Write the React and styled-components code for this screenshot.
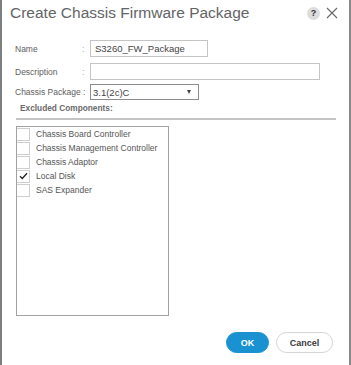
import React from "react";
import styled, { createGlobalStyle } from "styled-components";

const Global = createGlobalStyle`
  html, body { margin: 0; padding: 0; background: #fff; }
  body { font-family: "Liberation Sans", Arial, sans-serif; }
  * { box-sizing: border-box; }
`;

const Dialog = styled.div`
  width: 351px;
  height: 365px;
  background: #fff;
  border-left: 2px solid #7c7f80;
  border-right: 2px solid #8a8a8a;
  display: flex;
  flex-direction: column;
`;

const Header = styled.div`
  display: flex;
  align-items: center;
  justify-content: space-between;
  padding: 4px 8px 0 8px;
  height: 26px;
`;

const Title = styled.h1`
  margin: 0;
  font-size: 15.5px;
  line-height: 18px;
  font-weight: 400;
  color: #636466;
  align-self: flex-start;
`;

const HeaderIcons = styled.div`
  display: flex;
  align-items: center;
  gap: 6px;
  margin-top: -4px;
  margin-right: 3px;
`;

const HelpIcon = styled.span`
  width: 13px;
  height: 13px;
  border-radius: 50%;
  background: #dcdcdc;
  color: #333;
  font-size: 9px;
  font-weight: 700;
  display: flex;
  align-items: center;
  justify-content: center;
`;

const Form = styled.div`
  padding: 14px 0 0 13px;
  display: flex;
  flex-direction: column;
`;

const Row = styled.div`
  display: grid;
  grid-template-columns: 67px 8px auto;
  align-items: center;
  height: ${(p) => p.$h}px;
  margin-top: ${(p) => p.$mt}px;
`;

const Label = styled.span`
  font-size: 8.5px;
  color: #5e5e5e;
  white-space: nowrap;
`;

const Colon = styled.span`
  font-size: 8.5px;
  color: #aaa;
`;

const Input = styled.div`
  width: ${(p) => p.$w}px;
  height: 100%;
  border: 1px solid #c4c4c4;
  font-size: 9.5px;
  color: #444;
  display: flex;
  align-items: center;
  padding-left: 4px;
`;

const Select = styled(Input)`
  border-color: #8c8c8c;
  justify-content: space-between;
  padding-right: 7px;
  padding-left: 2px;
`;

const Arrow = styled.span`
  width: 0;
  height: 0;
  border-left: 2.5px solid transparent;
  border-right: 2.5px solid transparent;
  border-top: 4px solid #444;
`;

const SectionTitle = styled.div`
  margin: 3px 13px 0 14px;
  font-size: 8.3px;
  font-weight: 700;
  color: #6a6a6a;
  padding: 0 0 5px 4px;
  border-bottom: 2px solid #c4c4c4;
`;

const ListBox = styled.div`
  margin: 6px 0 0 14px;
  width: 153px;
  height: 190px;
  border: 1px solid #a2a2a2;
  display: flex;
  flex-direction: column;
`;

const Item = styled.div`
  display: flex;
  align-items: center;
  height: 14px;
  gap: 6px;
`;

const Box = styled.span`
  width: 13px;
  height: 13px;
  border: 1px solid #cfcfcf;
  border-left: none;
  display: flex;
  align-items: center;
  justify-content: center;
`;

const ItemText = styled.span`
  font-size: 8.5px;
  color: #555;
`;

const Footer = styled.div`
  margin-top: auto;
  display: flex;
  justify-content: flex-end;
  gap: 7px;
  padding: 0 16px 12px 0;
`;

const Button = styled.button`
  height: 21px;
  width: ${(p) => p.$w}px;
  border-radius: 11px;
  font-family: "Liberation Sans", Arial, sans-serif;
  font-size: 9px;
  font-weight: 700;
  padding: 0;
  cursor: pointer;
  background: ${(p) => (p.$primary ? "#1a92d2" : "#fff")};
  color: ${(p) => (p.$primary ? "#fff" : "#3a3a3a")};
  border: 1px solid ${(p) => (p.$primary ? "#1a92d2" : "#d4d4d4")};
`;

const items = [
  { name: "Chassis Board Controller", checked: false },
  { name: "Chassis Management Controller", checked: false },
  { name: "Chassis Adaptor", checked: false },
  { name: "Local Disk", checked: true },
  { name: "SAS Expander", checked: false },
];

export default function App() {
  return (
    <>
      <Global />
      <Dialog>
        <Header>
          <Title>Create Chassis Firmware Package</Title>
          <HeaderIcons>
            <HelpIcon>?</HelpIcon>
            <svg width="12" height="12" viewBox="0 0 12 12">
              <path d="M1 1 L11 11 M11 1 L1 11" stroke="#666" strokeWidth="1.1" fill="none" />
            </svg>
          </HeaderIcons>
        </Header>
        <Form>
          <Row $h={17} $mt={0}>
            <Label>Name</Label>
            <Colon>:</Colon>
            <Input $w={118}>S3260_FW_Package</Input>
          </Row>
          <Row $h={17} $mt={6}>
            <Label>Description</Label>
            <Colon>:</Colon>
            <Input $w={230} />
          </Row>
          <Row $h={16} $mt={4}>
            <Label>Chassis Package :</Label>
            <span />
            <Select $w={109}>
              3.1(2c)C
              <Arrow />
            </Select>
          </Row>
        </Form>
        <SectionTitle>Excluded Components:</SectionTitle>
        <ListBox>
          {items.map((it) => (
            <Item key={it.name}>
              <Box>
                {it.checked && (
                  <svg width="9" height="8" viewBox="0 0 9 8">
                    <path d="M1 4.2 L3.3 6.5 L8 1.2" stroke="#222" strokeWidth="1.3" fill="none" />
                  </svg>
                )}
              </Box>
              <ItemText>{it.name}</ItemText>
            </Item>
          ))}
        </ListBox>
        <Footer>
          <Button $primary $w={43}>OK</Button>
          <Button $w={57}>Cancel</Button>
        </Footer>
      </Dialog>
    </>
  );
}
